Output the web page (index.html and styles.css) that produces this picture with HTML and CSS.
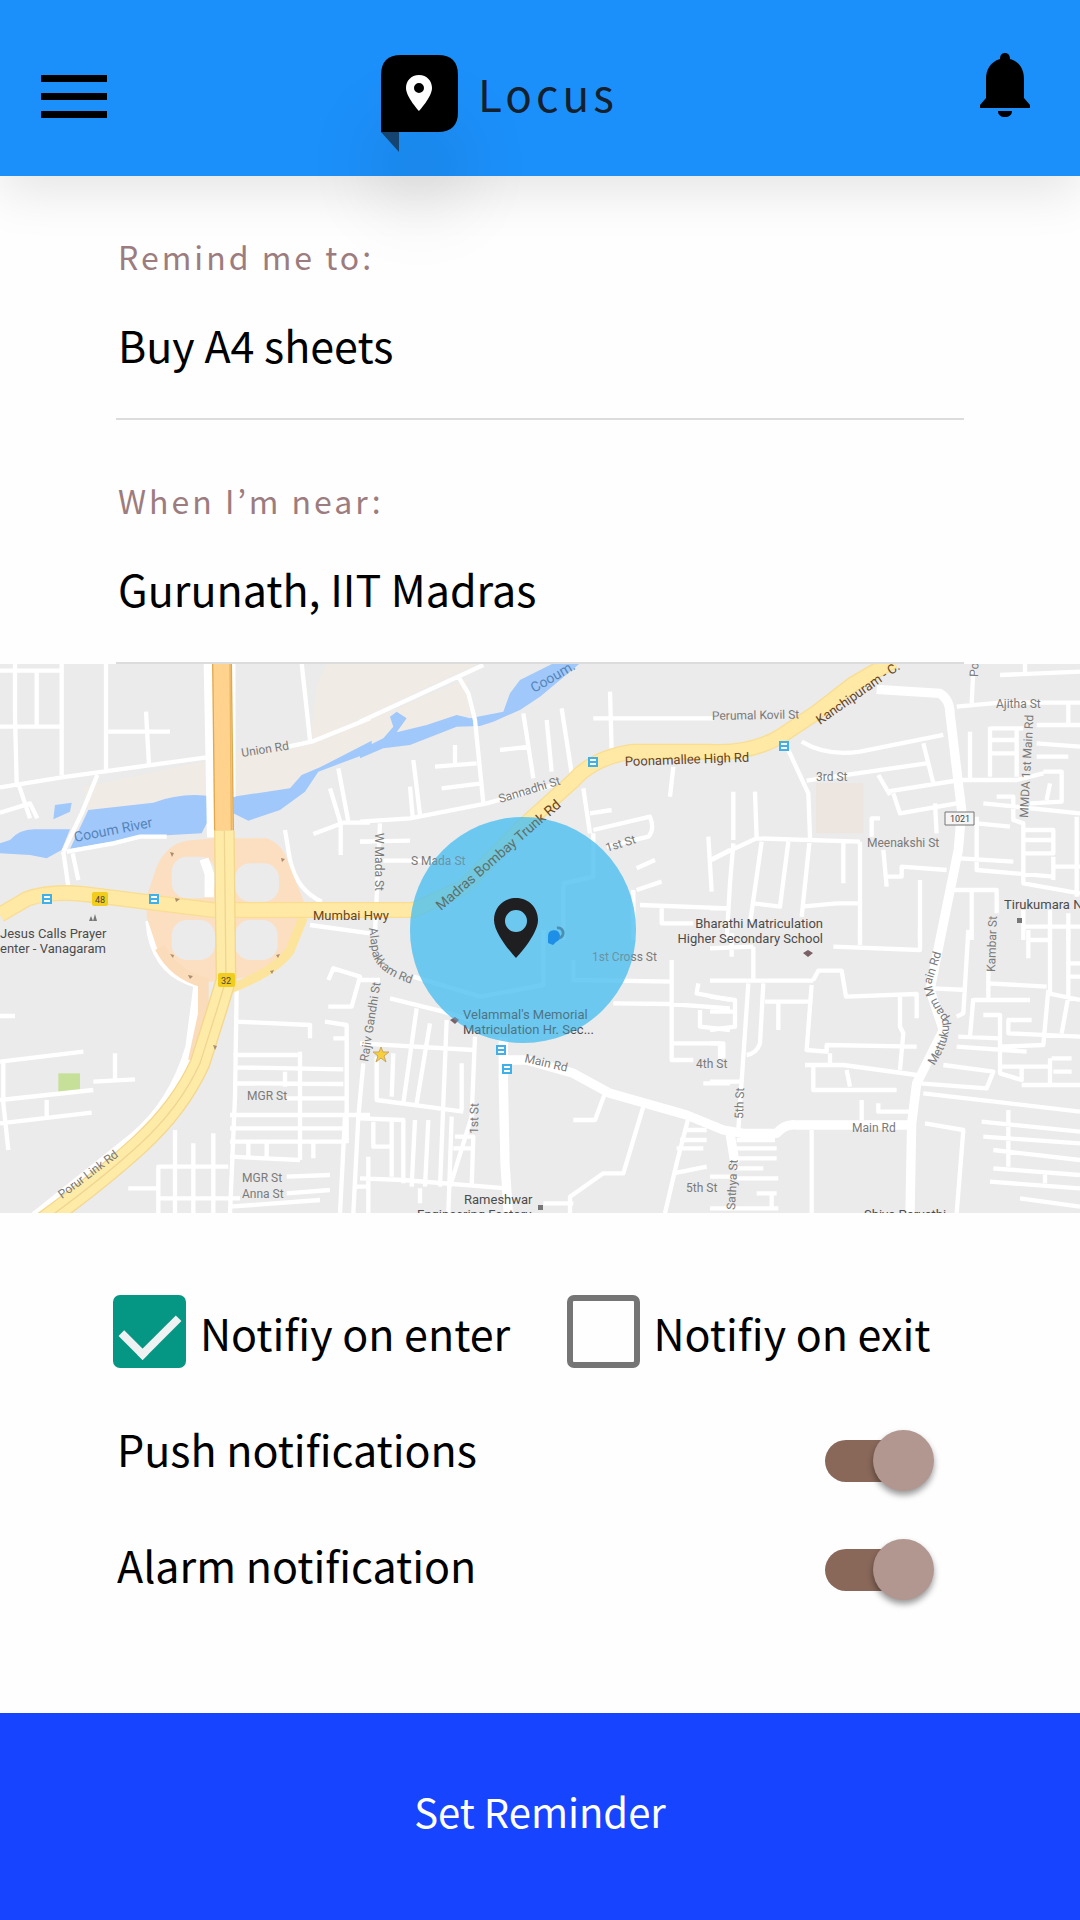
FILE: index.html
```html
<!DOCTYPE html>
<html lang="en">
<head>
<meta charset="utf-8">
<meta name="viewport" content="width=device-width, initial-scale=1">
<title>Locus</title>
<link rel="stylesheet" href="styles.css">
</head>
<body>
<header class="topbar">
  <button class="icon-button menu" type="button" aria-label="Menu">
    <svg width="66" height="46" viewBox="0 0 66 46"><path d="M0 1h66v7H0zM0 19h66v7H0zM0 37h66v7H0z"/></svg>
  </button>
  <div class="brand">
    <span class="logo">
      <svg width="77" height="97" viewBox="0 0 77 97">
        <path d="M20 0H57Q77 0 77 20V57Q77 77 57 77H0V20Q0 0 20 0Z"/>
        <path d="M0 77H18V97Z" fill="#14446f"/>
        <path fill="#fff" fill-rule="evenodd" d="M38 20c-8 0-13 6-13 13 0 9 13 23 13 23s13-14 13-23c0-7-5-13-13-13zm0 8a5 5 0 1 1 0 10 5 5 0 0 1 0-10z"/>
      </svg>
    </span>
    <span class="brand-name">Locus</span>
  </div>
  <button class="icon-button" type="button" aria-label="Notifications">
    <svg width="50" height="64" viewBox="0 0 50 64"><path d="M25 0c3 0 5 2 5 6 10 3 14 11 14 20v19l6 7v3H0v-3l6-7V26C6 17 10 9 20 6c0-4 2-6 5-6zM18 58h14c0 4-3 6-7 6s-7-2-7-6z"/></svg>
  </button>
</header>

<form class="reminder">
  <div class="field">
    <label for="task">Remind me to:</label>
    <input id="task" type="text" value="Buy A4 sheets">
  </div>
  <div class="field">
    <label for="place">When I’m near:</label>
    <input id="place" type="text" value="Gurunath, IIT Madras">
  </div>

  <svg class="map" viewBox="0 0 1080 549" role="img" aria-label="Map around Gurunath">
    <rect width="1080" height="549" fill="#ebebeb"/>
    <g transform="scale(.33333)">
      <!-- land patches -->
      <path fill="#f0ebe5" d="M980 0H1430L1080 165L930 235L950 60ZM250 370L620 290V395L470 415L265 440ZM710 260L930 235L1080 180L1400 45L1410 150L1110 235L960 310L870 373L700 398Z"/>
      <path fill="#ede5df" d="M2448 358H2590V508H2448Z"/>
      <path fill="#c6e09a" d="M175 1228H240V1288H175Z"/>
      <!-- river -->
      <g fill="#a0c8fb">
        <g transform="translate(0 -42)"><path d="M0 580L30 570Q60 535 110 538H210L185 600L140 625L90 615L0 610ZM210 597L265 480L460 458Q550 425 640 440V480L605 550L420 560ZM165 465L215 458L210 485L160 508ZM700 440L870 415L905 375L960 352L1115 272V305L955 365L915 425L840 480L745 512L700 490Z"/></g>
        <g transform="translate(1080 -42)"><path d="M0 300L70 265L100 230L90 200L110 185L140 205L110 247L200 225L290 195L330 205L430 185L450 130L480 90L580 40H660L540 140L480 180L400 215L360 228L290 230L150 285L70 295L0 325Z"/></g>
      </g>
      <!-- streets -->
      <g class="street">
        <g transform="translate(0 -42)"><path d="M0 62H180M45 40V200L50 400M110 65V225M0 230H180M185 40V375M318 40V365M325 245H510M438 185L447 345M0 412L185 382L620 322M55 400L90 505M0 488L90 460L112 505M292 375L245 490L190 605M190 605L205 710M218 610L235 690M200 605L340 580L420 560L500 560M905 40L930 270M865 290L935 275L1110 205M1015 355L1045 515M990 415L1022 520V615M940 552L1030 518H1110M1080 575H1110M855 540L870 630Q890 720 965 755M700 40V440M930 825L1110 850"/></g>
        <g transform="translate(1080 -42)"><path d="M0 215L370 45M295 80L325 130L345 210L370 460M0 515L150 505L380 460L600 400M225 350L350 340M285 285V340M160 330L180 495M150 410L158 500M245 415L365 400M420 300L510 290M490 190L520 385M560 210L575 365M605 175L635 370M750 125L755 300M700 205H1060M940 350L930 440M670 415L690 550M690 490L755 480M700 540L870 500Q885 540 865 560L740 590M60 520L45 850M0 575L150 572M70 632H310M1045 560L1055 725M1055 630L1110 600M830 655L885 630M830 720L905 695M820 720V870M840 765L1110 775M905 775V820H1000M700 550V680L610 700V870"/></g>
        <g transform="translate(2130 -42)"><path d="M275 275Q350 320 450 305L700 255M235 300L295 430L300 560L275 800M290 392L650 340M505 375L540 435M640 280L670 400M530 425L750 390H920L1000 370M550 430L570 490L740 460M740 170L870 158H1110M790 60L785 160M840 235H940M980 225H1110M840 230V380M920 235V380M840 270H920M840 310H920M780 245V390M1075 160V225M870 75L1110 65M945 40V70M980 280L1110 290M980 320H1075M1000 365H1055V455L960 460M1020 400L1010 450M70 425V570M135 425L140 565M0 630L140 565L450 575M155 575L120 820M70 580L60 700L50 870M235 575L210 770L130 760M400 580V700M450 575V870M485 560V505H510M520 600L530 710M530 680H575V650L710 660M675 460L680 550M630 690V870M750 625L910 635M800 500V660L1030 680M820 460L1110 490M800 520L900 530M860 440H910V510L940 520V700L1110 730M940 540H1030V610H940M940 570H1030M1030 650H1110M1030 620V690M1100 500V740M730 720H860V790M785 720V870M0 775H50M275 770L380 760H450M940 780V870M940 830H1110M1020 780V870M1075 790V870"/></g>
        <g transform="translate(0 798)"><path d="M0 258H45M0 395L250 365M10 390V520L25 660M0 510L280 480M345 370V450M280 455L405 448M140 510V560M0 580L275 548M710 180L705 500L690 850M710 275L930 285V325M985 150L1000 115L1080 140L1055 230H985M975 275L1040 285V640M1000 325H1040M700 375H900M700 412L1030 418M700 460L1030 462M900 365V690M855 425V470M860 505H1035M690 555H1110M690 595H1030M690 635H1035M690 680L900 690M745 640V680M800 640V690M940 640V685M685 710H475V850M525 600V850M580 640V850M640 610V850M385 775H475M475 805H720M860 740L990 735M860 790L990 780M690 830L960 810M1090 400L1075 560L1060 850M1035 560L1020 850M1060 770H1110"/></g>
        <g transform="translate(1080 798)"><path d="M0 150H60M90 205L250 245L330 270M0 340L340 360M170 235L130 520M210 280L170 520M260 270L240 770M50 380V510L310 545M100 370L95 500M345 320L335 560L270 770M305 400V540M0 565L130 570V760M40 575V650H95M95 575V740M165 570L155 770M205 570L195 770M275 560L265 850M280 655H340M285 620H340L335 770M0 745L130 750L440 775M25 680V850M180 775V820M735 490L705 570H640M850 530L790 730H730L630 800V850M985 565L950 700L915 850M970 600H1040M960 630H1040M950 655H1030M940 730L1040 710M550 820H640M640 90V150L940 155M760 220L930 222L1110 235M935 90V390H1000M940 340H1080V390M1015 160L1010 190L1110 210M1020 240V290L1110 300M1030 460H1110M160 140L360 200L550 165V0"/></g>
        <g transform="translate(2130 798)"><path d="M130 50V150M65 10V80M0 55L130 50M0 152H310M115 160L85 600M160 160L150 340Q140 370 110 375M165 215H300M205 215V300M310 150L325 122H395L408 200L620 192V265M305 165L290 360L350 365V345L620 350M0 200L75 210V290L0 300M0 245H70M0 340H40V385M0 455H90M570 200V290L580 310L570 420M360 370V405M285 405H400L620 435M310 410V480H560M410 420L420 470M305 600V850M455 510V570M505 520V545H600M370 50L630 60V0M450 0V45M670 175L770 180M775 0L760 250L740 260M835 120V205M835 160L1010 170M790 210H960M790 205L780 320M745 320L870 325M740 350L950 365M820 255H870V430L935 450V415M700 405L850 425L830 475L630 460M640 490L1110 545M645 580L760 600L740 850M895 540V710M815 575L1110 605M820 620L1110 640M850 660L1110 690M850 715L1110 735M840 755L1110 775M930 805L1110 830M1005 730V760M870 350L1000 345L1015 180M890 270H965M895 270V310L1110 320M1020 0V190M1075 0V200L1055 310M1075 100H1110M1080 140H1110M1015 190L1110 210M870 410H1020M1025 385H1085M1020 385V470M1030 425H1085M935 465H1110M955 0V85M955 30H1020M80 630H195M80 655H200M80 685H200M75 715H160M80 745H205M0 740H70M140 790H200M185 790V830M0 835H205"/></g>
      </g>
      <g class="avenue">
        <path d="M625 0L635 520M2630 76L2820 88Q2850 108 2850 148L2875 358L2885 438L2875 558L2820 828L2790 978L2830 1098L2750 1258L2735 1378L2730 1650M1510 1120V1248L1515 1498L1525 1650M1510 1188H1580L1720 1228L1830 1288L2060 1353L2170 1398L2230 1408H2330Q2355 1378 2390 1383H2730M2190 1408L2205 1498M450 770L455 810Q480 930 595 958L570 1150Q520 1320 400 1420L100 1660"/>
      </g>
      <!-- interchange and highways -->
      <path fill="#fbdfc0" d="M440 698L470 608Q500 540 560 530L640 523H800Q850 540 866 600L910 708V758L850 868Q810 930 740 940L600 958Q500 930 470 850L440 760Z"/>
      <g fill="#ebebeb">
        <rect x="515" y="578" width="130" height="125" rx="46"/>
        <rect x="705" y="598" width="132" height="115" rx="46"/>
        <rect x="515" y="768" width="130" height="120" rx="46"/>
        <rect x="705" y="768" width="128" height="120" rx="46"/>
      </g>
      <g fill="none">
        <path stroke="#fff" stroke-width="28" d="M612 585L628 630V700"/>
        <path stroke="#fbdcba" stroke-width="32" d="M480 850Q520 930 610 955V1050L580 1190"/>
        <path stroke="#fde49d" stroke-width="28" d="M910 760L870 860Q830 920 690 975"/>
        <path stroke="#f8dd93" stroke-width="48" d="M0 752L80 705Q150 680 250 690L500 721L640 738H1240L1390 670L1570 485L1720 350Q1780 280 1900 263H2130Q2250 270 2340 218L2450 145L2560 60L2680 -10"/>
        <path stroke="#ffe9a5" stroke-width="40" d="M0 752L80 705Q150 680 250 690L500 721L640 738H1240L1390 670L1570 485L1720 350Q1780 280 1900 263H2130Q2250 270 2340 218L2450 145L2560 60L2680 -10"/>
        <path stroke="#e2a84d" stroke-width="60" d="M666 -5L672 500"/>
        <path stroke="#ffd28e" stroke-width="52" d="M666 -5L672 500"/>
        <path stroke="#e8b562" stroke-width="4" d="M690 -5L694 500"/>
        <path stroke="#f3d78c" stroke-width="62" d="M673 500L678 948L650 1040L600 1198Q540 1330 420 1440Q300 1550 120 1680"/>
        <path stroke="#ffeba8" stroke-width="54" d="M673 500L678 948L650 1040L600 1198Q540 1330 420 1440Q300 1550 120 1680"/>
        <path stroke="#efd592" stroke-width="4" d="M673 500L678 948L650 1040L600 1198Q540 1330 420 1440Q300 1550 120 1680"/>
      </g>
    </g>

    <!-- reminder radius -->
    <circle cx="523" cy="266" r="113" fill="#4fc0f0" fill-opacity=".7"/>

    <!-- markers -->
    <g fill="#f3cd1d"><rect x="92" y="228" width="16" height="14" rx="2"/><rect x="218" y="309" width="17" height="14" rx="2"/></g>
    <g class="badge-text"><text x="100" y="239">48</text><text x="226" y="320">32</text></g>
    <path d="M945 148h29v13h-29z" fill="#f5f5f5" stroke="#777"/>
    <text class="badge-text" x="960" y="158">1021</text>
    <g fill="#fff" stroke="#3fb0e8" stroke-width="2">
      <path d="M43 231h8v8h-8zM43 235h8M150 231h8v8h-8zM150 235h8M589 94h8v8h-8zM589 98h8M780 78h8v8h-8zM780 82h8M497 382h8v8h-8zM497 386h8M503 401h8v8h-8zM503 405h8"/>
    </g>
    <g fill="#777">
      <path d="M1017 254h5v5h-5zM538 541h5v5h-5zM89 257l2-5 2 5zM93 257l2-7 2 7z"/>
      <path d="M803 289l5-3 5 3-5 4zM450 356l5-3 4 3-4 4z" fill="#7c6068"/>
      <path d="M170 188l4 1-2 4zM281 194l4 1-3 3zM175 234l5 1-4 3zM170 290l4 1-1 3zM276 291l4-1-2 4zM188 311l5 1-3 3zM270 307l4-1-2 4zM213 381l4 1-2 4z" fill="#a98d6c"/>
    </g>
    <path fill="#f7cf3c" stroke="#c9a75e" d="M381 383l2 5 6 0-5 4 2 6-5-4-5 4 2-6-5-4 6 0z"/>

    <!-- labels -->
    <g class="road-label">
      <text transform="translate(242 93) rotate(-9)">Union Rd</text>
      <text transform="translate(500 139) rotate(-17)">Sannadhi St</text>
      <text transform="translate(712 56) rotate(-1)">Perumal Kovil St</text>
      <text transform="translate(375 169) rotate(90)">W Mada St</text>
      <text x="411" y="201">S Mada St</text>
      <text transform="translate(607 188) rotate(-17)">1st St</text>
      <text x="816" y="117">3rd St</text>
      <text x="996" y="44">Ajitha St</text>
      <text transform="translate(978 13) rotate(-88)">Po</text>
      <text transform="translate(1028 154) rotate(-87)">MMDA 1st Main Rd</text>
      <text x="867" y="183">Meenakshi St</text>
      <text transform="translate(995 308) rotate(-88)">Kambar St</text>
      <text x="592" y="297">1st Cross St</text>
      <path id="curve-a" fill="none" d="M369 264L372 288Q376 312 424 323"/>
      <text><textPath href="#curve-a">Alapakkam Rd</textPath></text>
      <text transform="translate(368 398) rotate(-81)">Rajiv Gandhi St</text>
      <text transform="translate(524 398) rotate(13)">Main Rd</text>
      <text x="696" y="404">4th St</text>
      <text transform="translate(743 455) rotate(-88)">5th St</text>
      <text x="852" y="468">Main Rd</text>
      <path id="curve-m" fill="none" d="M934 402Q954 372 947 352Q932 330 932 318L946 274"/>
      <text><textPath href="#curve-m">Mettukuppam Main Rd</textPath></text>
      <text transform="translate(735 546) rotate(-87)">Sathya St</text>
      <text x="686" y="528">5th St</text>
      <text transform="translate(478 470) rotate(-89)">1st St</text>
      <text x="247" y="436">MGR St</text>
      <text x="242" y="518">MGR St</text>
      <text x="242" y="534">Anna St</text>
      <text transform="translate(62 535) rotate(-37)">Porur Link Rd</text>
    </g>
    <g class="river-label">
      <text transform="translate(75 178) rotate(-11)">Cooum River</text>
      <text transform="translate(534 29) rotate(-30)">Cooum.</text>
    </g>
    <g class="highway-label">
      <text x="313" y="256">Mumbai Hwy</text>
      <text transform="translate(625 102) rotate(-2)">Poonamallee High Rd</text>
      <text class="trunk" transform="translate(441 247) rotate(-41)">Madras Bombay Trunk Rd</text>
      <text transform="translate(820 61) rotate(-35)">Kanchipuram - C.</text>
    </g>
    <g class="place-label">
      <text x="0" y="274">Jesus Calls Prayer</text>
      <text x="0" y="289">enter - Vanagaram</text>
      <text x="1004" y="245">Tirukumara N</text>
      <text x="823" y="264" text-anchor="end">Bharathi Matriculation</text>
      <text x="823" y="279" text-anchor="end">Higher Secondary School</text>
      <text x="463" y="355">Velammal's Memorial</text>
      <text x="463" y="370">Matriculation Hr. Sec...</text>
      <text x="464" y="540">Rameshwar</text>
      <text x="417" y="555">Engineering Factory</text>
      <text x="864" y="555">Shiva Parvathi</text>
    </g>

    <!-- tint over the labels, then the pin -->
    <circle cx="523" cy="266" r="113" fill="#4fc0f0" fill-opacity=".35"/>
    <path fill="#1e8fe6" d="M548 272a6 6 0 1 1 8 6l-3 3-5-2z"/>
    <path fill="none" stroke="#4a8fb4" stroke-width="3" d="M557 264a5 5 0 1 1 2 10"/>
    <path fill="#1f1f21" fill-rule="evenodd" d="M516 234c-13 0-22 10-22 22 0 15 22 38 22 38s22-23 22-38c0-12-9-22-22-22zm0 12a11 11 0 1 1 0 22 11 11 0 0 1 0-22z"/>
  </svg>

  <div class="checks">
    <label class="check"><input type="checkbox" checked>Notifiy on enter</label>
    <label class="check"><input type="checkbox">Notifiy on exit</label>
  </div>

  <div class="switches">
    <div class="switch-labels">
      <label for="push">Push notifications</label>
      <label for="alarm">Alarm notification</label>
    </div>
    <div class="switch-controls">
      <input id="push" class="switch" type="checkbox" role="switch" checked>
      <input id="alarm" class="switch" type="checkbox" role="switch" checked>
    </div>
  </div>

  <button class="submit" type="submit">Set Reminder</button>
</form>
</body>
</html>
```
FILE: styles.css
```css
* {
  box-sizing: border-box;
}

body {
  margin: 0;
  min-height: 100vh;
  display: flex;
  flex-direction: column;
  background: #fefefe;
  color: #000;
  font-family: "Noto Sans CJK KR", "Noto Sans", sans-serif;
  font-size: 43px;
  line-height: 60px;
}

button,
input {
  font: inherit;
  color: inherit;
  margin: 0;
  padding: 0;
  border: 0;
  background: none;
}

svg {
  display: block;
}

.topbar {
  display: grid;
  grid-template-columns: 340px 1fr auto;
  align-items: start;
  height: 176px;
  padding: 53px 50px 0 41px;
  background: #1c90fa;
  box-shadow: 0 16px 48px rgba(0, 0, 0, 0.1);
}

.menu {
  margin-top: 21px;
  justify-self: start;
}

.brand {
  display: flex;
  gap: 20px;
  margin-top: 2px;
}

.logo {
  height: 77px;
  border-radius: 20px;
  box-shadow: 0 70px 80px rgba(0, 0, 0, 0.12);
}

.brand-name {
  color: #14202c;
  font-size: 44px;
  letter-spacing: 4px;
  line-height: 76px;
}

.reminder {
  flex: 1;
  display: flex;
  flex-direction: column;
}

.field {
  display: flex;
  flex-direction: column;
  gap: 38px;
  margin: 0 116px;
  padding: 60px 2px 44px;
  border-bottom: 2px solid #dcdcdc;
}

.field label {
  color: #9c7c7e;
  font-size: 32px;
  line-height: 40px;
  letter-spacing: 3px;
}

.field input {
  width: 100%;
  height: 60px;
  outline: none;
}

.map {
  width: 100%;
  height: auto;
  overflow: hidden;
  font-family: Roboto, sans-serif;
  font-size: 13px;
}

.street,
.avenue {
  fill: none;
  stroke: #fff;
  stroke-linejoin: round;
}

.street {
  stroke-width: 13px;
}

.avenue {
  stroke-width: 28px;
}

.road-label {
  fill: #7a7a7a;
  font-size: 12px;
}

.river-label {
  fill: #5684b8;
  font-size: 14px;
}

.highway-label {
  fill: #674420;
}

.trunk {
  font-size: 14px;
}

.place-label {
  fill: #4c4c4c;
}

.badge-text {
  fill: #444;
  font-size: 9px;
  text-anchor: middle;
}

.checks {
  display: grid;
  grid-template-columns: 1fr 1fr;
  padding: 82px 60px 0 113px;
}

.check {
  display: flex;
  align-items: center;
  gap: 14px;
}

.check input {
  appearance: none;
  display: grid;
  justify-content: center;
  flex: none;
  width: 73px;
  height: 73px;
  border: 6px solid #757575;
  border-radius: 7px;
}

.check input:checked {
  border-color: #069684;
  background: #069684;
}

.check input:checked::after {
  content: "";
  width: 26px;
  height: 47px;
  border: solid #eef2f2;
  border-width: 0 8px 8px 0;
  transform: rotate(45deg);
}

.switches {
  display: flex;
  justify-content: space-between;
  padding: 50px 146px 111px 117px;
}

.switch-labels,
.switch-controls {
  display: flex;
  flex-direction: column;
}

.switch-labels {
  gap: 56px;
}

.switch-controls {
  gap: 48px;
  padding-top: 12px;
}

.switch {
  appearance: none;
  display: grid;
  align-items: center;
  width: 109px;
  height: 61px;
}

.switch::before,
.switch::after {
  content: "";
  grid-area: 1 / 1;
}

.switch::before {
  width: 80px;
  height: 42px;
  border-radius: 21px;
  background: #89685a;
}

.switch::after {
  justify-self: end;
  width: 61px;
  height: 61px;
  border-radius: 50%;
  background: #b1978f;
  box-shadow: 0 4px 6px rgba(0, 0, 0, 0.4);
}

.submit {
  margin-top: auto;
  height: 207px;
  padding-bottom: 12px;
  background: #1644ff;
  color: #fff;
  font-size: 40px;
}
```
